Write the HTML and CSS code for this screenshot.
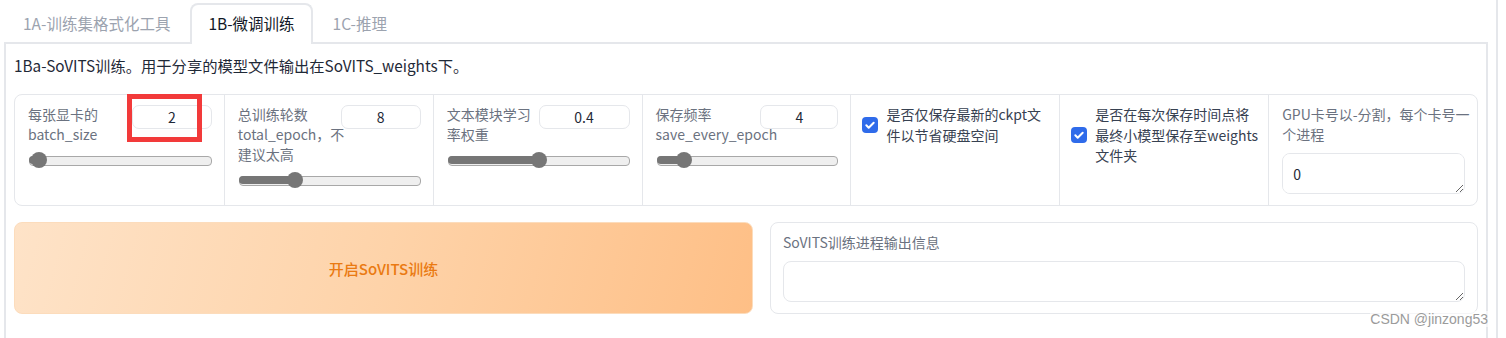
FILE: index.html
```html
<!DOCTYPE html>
<html lang="zh-CN">
<head>
<meta charset="utf-8">
<title>GPT-SoVITS</title>
<link rel="stylesheet" href="styles.css">
</head>
<body>
<div class="app">
  <div class="tabs">
    <div class="tab">1A-训练集格式化工具</div>
    <div class="tab tab-active">1B-微调训练</div>
    <div class="tab">1C-推理</div>
  </div>
  <div class="panel">
    <p class="desc">1Ba-SoVITS训练。用于分享的模型文件输出在SoVITS_weights下。</p>
    <div class="params">
      <div class="cell">
        <div class="head">
          <span class="label">每张显卡的<br>batch_size</span>
          <input class="num" type="text" value="2">
        </div>
        <div class="slider" style="--p:0.01"><div class="fill"></div><div class="thumb"></div></div>
        <div class="mark"></div>
      </div>
      <div class="cell">
        <div class="head">
          <span class="label">总训练轮数<br>total_epoch，不<br>建议太高</span>
          <input class="num" type="text" value="8">
        </div>
        <div class="slider" style="--p:0.29"><div class="fill"></div><div class="thumb"></div></div>
      </div>
      <div class="cell">
        <div class="head">
          <span class="label">文本模块学习<br>率权重</span>
          <input class="num num-wide" type="text" value="0.4">
        </div>
        <div class="slider" style="--p:0.5"><div class="fill"></div><div class="thumb"></div></div>
      </div>
      <div class="cell">
        <div class="head">
          <span class="label">保存频率<br>save_every_epoch</span>
          <input class="num num-narrow" type="text" value="4">
        </div>
        <div class="slider" style="--p:0.12"><div class="fill"></div><div class="thumb"></div></div>
      </div>
      <div class="cell cell-check">
        <label class="check">
          <span class="box"><svg viewBox="0 0 16 16" width="16" height="16"><path d="M4.3 8.3l2.4 2.4 5-5" fill="none" stroke="#fff" stroke-width="2" stroke-linecap="round" stroke-linejoin="round"/></svg></span>
          <span class="check-text">是否仅保存最新的ckpt文<br>件以节省硬盘空间</span>
        </label>
      </div>
      <div class="cell cell-check">
        <label class="check">
          <span class="box"><svg viewBox="0 0 16 16" width="16" height="16"><path d="M4.3 8.3l2.4 2.4 5-5" fill="none" stroke="#fff" stroke-width="2" stroke-linecap="round" stroke-linejoin="round"/></svg></span>
          <span class="check-text">是否在每次保存时间点将<br>最终小模型保存至weights<br>文件夹</span>
        </label>
      </div>
      <div class="cell">
        <span class="label label-block">GPU卡号以-分割，每个卡号一<br>个进程</span>
        <textarea class="area gpu-area">0</textarea>
      </div>
    </div>
    <div class="actions">
      <button class="start-btn">开启SoVITS训练</button>
      <div class="output">
        <span class="label label-block">SoVITS训练进程输出信息</span>
        <textarea class="area out-area"></textarea>
      </div>
    </div>
  </div>
  <div class="watermark">CSDN @jinzong53</div>
</div>
</body>
</html>
```

FILE: styles.css
```css
* { box-sizing: border-box; }
html, body { margin: 0; padding: 0; background: #fff; }
body {
  font-family: "Noto Sans CJK SC", "Noto Sans", sans-serif;
  color: #1f2937;
  overflow: hidden;
}
.app {
  position: relative;
  width: 1498px;
  height: 338px;
  overflow: hidden;
  border-right: 2px solid #e5e7eb;
}
.tabs {
  display: flex;
  gap: 2px;
  padding-left: 5px;
  padding-top: 3px;
  height: 42px;
}
.tab {
  height: 41px;
  padding: 0 16px;
  border: 2px solid transparent;
  border-bottom: none;
  border-radius: 8px 8px 0 0;
  font-size: 15.5px;
  line-height: 37px;
  color: #9ca3af;
  background: transparent;
  position: relative;
  z-index: 1;
}
.tab-active {
  color: #111827;
  background: #fff;
  border-color: #e5e7eb;
}
.panel {
  margin-left: 4px;
  width: 1484px;
  height: 320px;
  border: 2px solid #e5e7eb;
  padding: 10px 8px 0 8px;
}
.desc {
  margin: 0;
  font-size: 15.3px;
  line-height: 22px;
  color: #1f2937;
}
.params {
  position: relative;
  margin-top: 18px;
  display: grid;
  grid-template-columns: repeat(7, minmax(0, 1fr));
  height: 112px;
  border: 1px solid #e5e7eb;
  border-radius: 8px;
}
.cell {
  min-width: 0;
  padding: 9px 12px 8px 13px;
  border-left: 1px solid #e5e7eb;
  display: flex;
  flex-direction: column;
}
.cell:first-child { border-left: none; }
.head {
  display: flex;
  align-items: flex-start;
  gap: 4px;
}
.label {
  flex: 1;
  min-width: 0;
  font-size: 14px;
  line-height: 20px;
  color: #6b7280;
  white-space: nowrap;
}
.label-block { flex: none; }
.num {
  flex: none;
  width: 80px;
  height: 24px;
  margin-top: 1px;
  border: 1px solid #e5e7eb;
  border-radius: 7px;
  text-align: center;
  font-family: "Noto Sans CJK SC", "Noto Sans", sans-serif;
  font-size: 14px;
  color: #1f2937;
  background: #fff;
  padding: 0;
  outline: none;
}
.num-wide { width: 91px; }
.num-narrow { width: 78px; }
.slider {
  position: relative;
  height: 16px;
  margin-top: 8px;
  margin-left: 1px;
}
.slider::before {
  content: "";
  position: absolute;
  left: 0;
  right: 0;
  top: 4px;
  height: 8px;
  border: 1px solid #a8a8a8;
  border-radius: 4px;
  background: #efefef;
}
.fill {
  position: absolute;
  left: 0;
  top: 4px;
  height: 8px;
  width: calc((100% - 16px) * var(--p) + 8px);
  border-radius: 4px 0 0 4px;
  background: #767676;
}
.thumb {
  position: absolute;
  top: 0;
  left: calc((100% - 16px) * var(--p));
  width: 16px;
  height: 16px;
  border-radius: 50%;
  background: #767676;
}
.mark {
  position: absolute;
  left: 112px;
  top: -1px;
  width: 75px;
  height: 48px;
  border: 5px solid #f23a3a;
}
.cell-check {
  padding-left: 11px;
}
.check {
  display: flex;
  align-items: center;
  gap: 8px;
}
.box {
  flex: none;
  width: 16px;
  height: 16px;
  border-radius: 4px;
  background: #2f6bea;
  display: flex;
}
.check-text {
  font-size: 14px;
  line-height: 20.5px;
  color: #374151;
  white-space: nowrap;
}
.area {
  display: block;
  width: 100%;
  border: 1px solid #e5e7eb;
  border-radius: 8px;
  font-family: "Noto Sans CJK SC", "Noto Sans", sans-serif;
  font-size: 14px;
  color: #1f2937;
  background: #fff;
  outline: none;
  resize: vertical;
}
.gpu-area {
  margin-top: 9px;
  height: 41px;
  padding: 10px 10px;
  line-height: 20px;
}
.actions {
  margin-top: 16px;
  display: grid;
  grid-template-columns: 739px 1fr;
  gap: 17px;
}
.start-btn {
  height: 92px;
  border: 1px solid #fcdcbc;
  border-radius: 8px;
  background: linear-gradient(105deg, #fee3c8 0%, #fed3a9 50%, #febf86 100%);
  font-family: "Noto Sans CJK SC", "Noto Sans", sans-serif;
  font-size: 15px;
  font-weight: 500;
  color: #ea7a12;
  padding: 0;
}
.output {
  height: 92px;
  border: 1px solid #e5e7eb;
  border-radius: 8px;
  padding: 9px 12px 0 12px;
  display: flex;
  flex-direction: column;
}
.out-area {
  margin-top: 9px;
  height: 41px;
}
.watermark {
  position: absolute;
  right: 8px;
  top: 311px;
  font-family: "Liberation Sans", Arial, sans-serif;
  font-size: 14px;
  color: #9b9b9b;
  background: rgba(255,255,255,0.6);
}
```
